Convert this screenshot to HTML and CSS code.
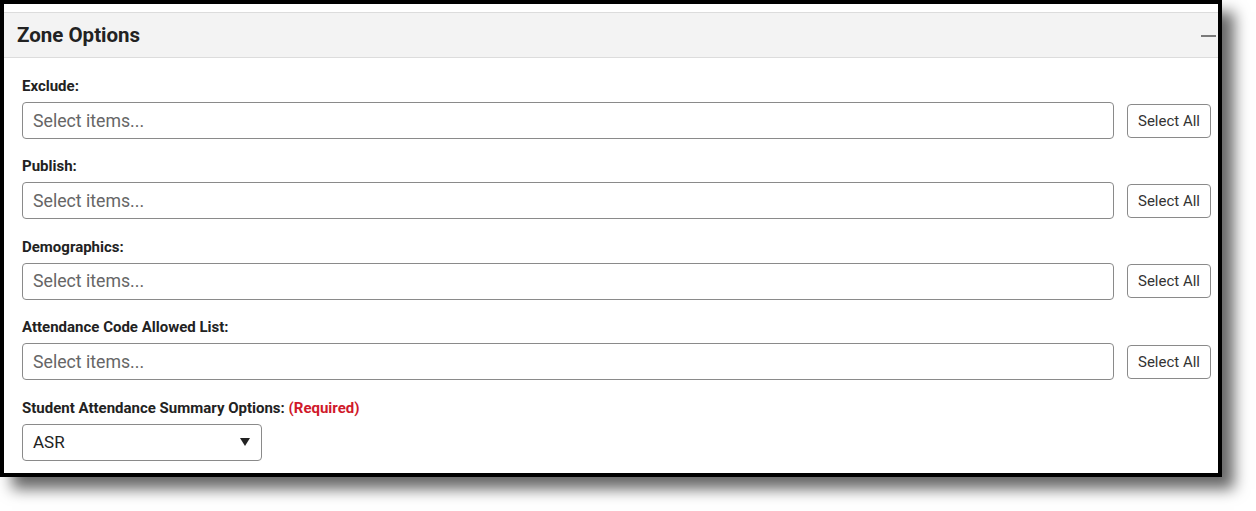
FILE: index.html
```html
<!DOCTYPE html>
<html>
<head>
<meta charset="utf-8">
<link rel="stylesheet" href="styles.css">
</head>
<body>
<div class="frame">
  <div class="panel">
    <div class="header">
      <span class="title">Zone Options</span>
      <span class="collapse"></span>
    </div>
    <div class="content">
      <div class="field">
        <div class="label">Exclude:</div>
        <div class="row">
          <div class="input">Select items...</div>
          <div class="btn">Select All</div>
        </div>
      </div>
      <div class="field">
        <div class="label">Publish:</div>
        <div class="row">
          <div class="input">Select items...</div>
          <div class="btn">Select All</div>
        </div>
      </div>
      <div class="field">
        <div class="label">Demographics:</div>
        <div class="row">
          <div class="input">Select items...</div>
          <div class="btn">Select All</div>
        </div>
      </div>
      <div class="field">
        <div class="label">Attendance Code Allowed List:</div>
        <div class="row">
          <div class="input">Select items...</div>
          <div class="btn">Select All</div>
        </div>
      </div>
      <div class="field">
        <div class="label">Student Attendance Summary Options: <span class="req">(Required)</span></div>
        <div class="select">
          <span>ASR</span>
          <span class="caret"></span>
        </div>
      </div>
    </div>
  </div>
</div>
</body>
</html>
```

FILE: styles.css
```css
html, body {
  margin: 0;
  padding: 0;
  background: #fff;
}
body {
  font-family: Roboto, "Liberation Sans", Arial, sans-serif;
  color: #222;
  height: 511px;
}
.frame {
  width: 1214px;
  height: 469px;
  border: 4px solid #000;
  background: #fff;
  box-shadow: 12px 12px 14px 0 rgba(0, 0, 0, 0.6);
  overflow: hidden;
}
.panel {
  padding-top: 8px;
}
.header {
  height: 44px;
  background: #f3f3f3;
  border-top: 1px solid #dcdcdc;
  border-bottom: 1px solid #dcdcdc;
  display: flex;
  align-items: center;
  justify-content: space-between;
  padding: 0 2px 0 13px;
}
.title {
  font-size: 20.5px;
  font-weight: 700;
  color: #222;
}
.collapse {
  width: 15px;
  height: 2px;
  background: #7a7a7a;
  margin-top: 1px;
}
.content {
  padding: 18px 7px 0 18px;
}
.field {
  margin-bottom: 17.4px;
}
.label {
  font-size: 15px;
  font-weight: 700;
  line-height: 20px;
  color: #222;
  margin-bottom: 6px;
}
.req {
  color: #d0192b;
}
.row {
  display: flex;
  align-items: center;
  gap: 13px;
}
.input {
  flex: 1;
  height: 35px;
  border: 1px solid #8a8a8a;
  border-radius: 4px;
  display: flex;
  align-items: center;
  padding-left: 10px;
  font-size: 17.7px;
  color: #666;
}
.btn {
  width: 82px;
  height: 32px;
  border: 1px solid #8a8a8a;
  border-radius: 4px;
  display: flex;
  align-items: center;
  justify-content: center;
  font-size: 15px;
  color: #333;
}
.select {
  width: 217px;
  height: 35px;
  border: 1px solid #8a8a8a;
  border-radius: 4px;
  display: flex;
  align-items: center;
  justify-content: space-between;
  padding: 0 11px 0 10px;
  font-size: 17px;
  color: #222;
}
.caret {
  width: 0;
  height: 0;
  border-left: 5px solid transparent;
  border-right: 5px solid transparent;
  border-top: 8px solid #222;
}
```
